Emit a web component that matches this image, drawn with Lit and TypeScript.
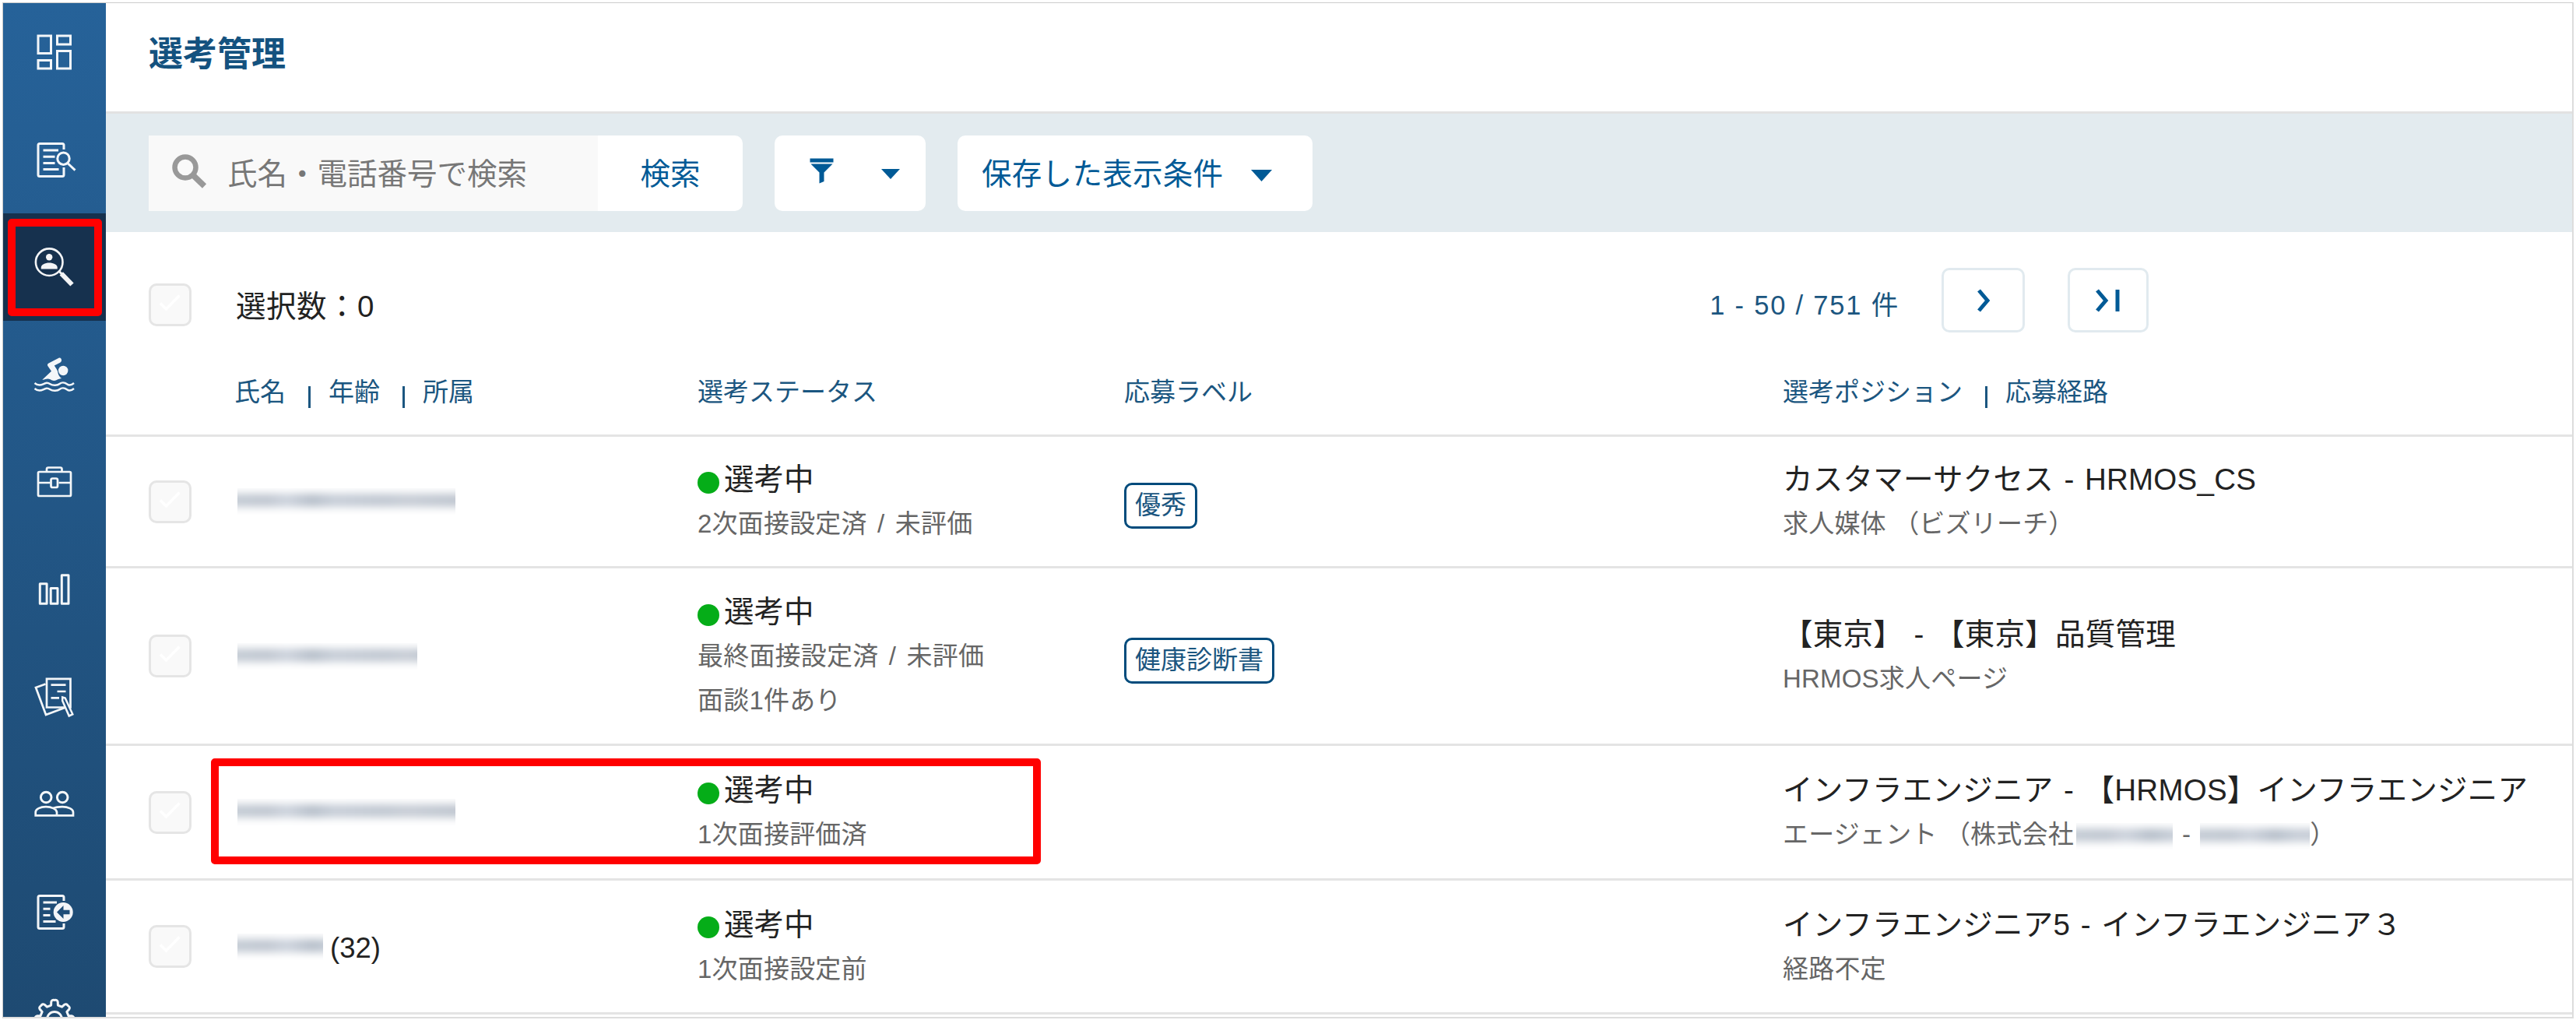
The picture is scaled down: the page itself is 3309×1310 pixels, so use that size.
import { LitElement, html, css, svg, nothing } from "lit";
import { customElement, property } from "lit/decorators.js";
import { classMap } from "lit/directives/class-map.js";
import { styleMap } from "lit/directives/style-map.js";

/* Outline of an eight-tooth gear centred on (30, 30). */
const gearPath = (() => {
  const pts: string[] = [];
  for (let i = 0; i < 8; i++) {
    const a = (i * Math.PI) / 4 - Math.PI / 2;
    const at = (r: number, d: number) =>
      `${(30 + r * Math.cos(a + d)).toFixed(2)} ${(30 + r * Math.sin(a + d)).toFixed(2)}`;
    pts.push(
      `${i ? "L" : "M"}${at(18.5, -0.24)}L${at(22.5, -0.19)}Q${at(25.5, -0.15)} ${at(24.6, 0)}Q${at(25.5, 0.15)} ${at(22.5, 0.19)}L${at(18.5, 0.24)}`
    );
  }
  return pts.join("") + "Z";
})();

const icons: Record<string, unknown> = {
  dashboard: svg`<path d="M9 9h16.5v22.5H9zM9 40.5h16.5V51H9zM33.5 9h17v11h-17zM33.5 28.5h17V51h-17z"/>`,
  jobs: svg`
    <path d="M42 17v-5.500a2 2 0 0 0-2-2H11a2 2 0 0 0-2 2v38a2 2 0 0 0 2 2h29a2 2 0 0 0 2-2V40"/>
    <path d="M15.500 18h19.500M15.500 26.300h15M15.500 34.500h15M15.500 42.600h20"/>
    <circle cx="41.500" cy="28.700" r="7.700"/><path d="M47.300 35l9.200 8.700"/>`,
  candidates: svg`
    <circle cx="23.200" cy="23.700" r="17.300" stroke-width="2.600"/>
    <path d="M35.500 35l4 4"/><path d="M38.800 38.300l13.700 14.200" stroke-width="6"/>
    <circle class="solid" cx="23.200" cy="17.300" r="4.200"/>
    <path class="solid" d="M12.800 32.500V30.500c0-3.600 5-6 10.400-6s10.500 2.400 10.500 6v2z"/>`,
  swimmer: svg`
    <path class="solid" d="M35.500 8.700l-13 6.800c-1.600.900-1.900 2.300-1 3.800l4.500 6.500-11.700 10.900c3 .300 4.600-1.300 7.400-1.200 3.600.200 4.300 2.500 7.800 2.400 3.600-.100 4.700-2.300 9.600-2.800-2-1.600-4.300-4.300-4.600-7.200-.200-3-2.600-6.100-4.700-9.300l7.400-3.900c3.400-1.900 1.700-7.500-1.700-6z"/>
    <circle class="solid" cx="41.200" cy="25" r="6.200"/>
    <path d="M4.500 41C8 44 12 44 15.500 42.300S21 40 24.500 42.300S34 44 36.500 42S43 40 46 42.300S52 43.500 55 41" stroke-width="2.500"/>
    <path d="M4.500 48C8 51 12 51 15.500 49.300S21 47 24.500 49.300S34 51 36.500 49S43 47 46 49.300S52 50.500 55 48" stroke-width="2.500"/>`,
  briefcase: svg`
    <rect x="9" y="17" width="42" height="31" rx="1.500" stroke-width="2.700"/>
    <path d="M20 16v-2.500a2 2 0 0 1 2-2h15.500a2 2 0 0 1 2 2V16M9 31h15.500M35.500 31H51" stroke-width="2.700"/>
    <rect x="25.500" y="25.500" width="8.500" height="11.500" rx="2" stroke-width="2.700"/>`,
  chart: svg`<path d="M11.300 22.800h8.800v25.400h-8.800zM25.200 28.500H34v19.700h-8.800zM39.300 11.800H48v36.400h-8.700z" stroke-linejoin="round"/>`,
  papers: svg`
    <path d="M20 6.800h30.500V43.500H20z" stroke-width="2.700"/>
    <path d="M18.500 13.500L6 18l13 35 24-9" stroke-width="2.700"/>
    <path d="M25.500 14.700h19M33.500 23h11M25.500 31.300H36" stroke-width="2.700"/>
    <path class="cut" d="M40.200 30.500l3.500 1 9.600 20.800-4.600 2.200-8.500-19.500z" stroke-width="2.500"/>`,
  people: svg`
    <circle cx="19.200" cy="21" r="6.800"/><circle cx="40.200" cy="21" r="6.800"/>
    <path d="M5.700 44.300V40c0-4 6-6.800 13.300-6.800S32.500 36 33 40v4.300zM28 35.200c3.500-1.500 7.500-2 12-2C47.500 33.200 54 36 54 40v4.300H33" stroke-width="2.700"/>`,
  report: svg`
    <path d="M42 16v-4.500a2 2 0 0 0-2-2H11a2 2 0 0 0-2 2v38a2 2 0 0 0 2 2h29a2 2 0 0 0 2-2V45"/>
    <path d="M15.500 18H33M15.500 26.300h9M15.500 34.500h9M15.500 42.600h16"/>
    <circle class="solid" cx="41.200" cy="30.500" r="12.500"/>
    <path class="hole" d="M33 30.500l8.500-8.500v5.700h8v5.600h-8V39z"/>`,
  gear: svg`<path d=${gearPath} stroke-linejoin="round"/><circle cx="30" cy="30" r="9.500"/>`,
};

const navItems = ["dashboard", "jobs", "candidates", "swimmer", "briefcase", "chart", "papers", "people", "report", "gear"];

@customElement("side-nav")
class SideNav extends LitElement {
  static styles = css`
    :host { display: block; width: 132px; flex: none; overflow: hidden; background: linear-gradient(#266299, #1e4a72); }
    .list { display: flex; flex-direction: column; margin-top: -6px; }
    .item { height: 138px; flex: none; display: flex; align-items: center; justify-content: center; position: relative; }
    .active { background: #16314e; }
    .marker { position: absolute; left: 6px; top: 7px; width: 101px; height: 105px; border: 10px solid #f00; border-radius: 5px; }
    svg { width: 60px; height: 60px; fill: none; stroke: #fff; stroke-width: 3; opacity: 0.95; }
    .solid { fill: #fff; stroke: none; }
    .cut { fill: #205080; }
    .hole { fill: #1f4e79; stroke: none; }
  `;
  render() {
    return html`<div class="list">
      ${navItems.map((name) => {
        const active = name === "candidates";
        return html`<div class=${classMap({ item: true, active })}>
          <svg viewBox="0 0 60 60">${icons[name]}</svg>
          ${active ? html`<div class="marker"></div>` : nothing}
        </div>`;
      })}
    </div>`;
  }
}

@customElement("check-box")
class CheckBox extends LitElement {
  static styles = css`
    :host { display: block; }
    .box { box-sizing: border-box; width: 55px; height: 55px; border: 3px solid #e5e5e5; border-radius: 10px; background: #f9f9f9; }
    svg { display: block; width: 49px; height: 49px; fill: none; stroke: #fff; stroke-width: 3.500; }
  `;
  render() {
    return html`<div class="box"><svg viewBox="0 0 49 49"><path d="M12 22.500l7.500 7.500 17-17.500" /></svg></div>`;
  }
}

/* A masked name: soft smudges clipped to a box. */
@customElement("masked-text")
class MaskedText extends LitElement {
  @property({ type: Number }) width = 100;
  static styles = css`
    :host { display: inline-block; vertical-align: middle; }
    .clip { height: 34px; overflow: hidden; display: flex; align-items: center; }
    .smudge { height: 17px; flex: none; width: calc(100% + 24px); margin: -3px 0 0 -12px; filter: blur(5.5px);
      background: linear-gradient(90deg, #c3cbd4, #bfc6d0 50px, #ccd2dc 76px, #b5bec9 108px, #c6cdd7 136px, #c0c7d1 200px, #c6ccd5 230px, #bcc3cd); }
  `;
  render() {
    return html`<div class="clip" style=${styleMap({ width: `${this.width}px` })}><div class="smudge"></div></div>`;
  }
}

interface Row {
  height: number;
  mask: number;
  age?: string;
  status: string[];
  label?: string;
  title: string;
  route: unknown;
  marked?: boolean;
}

const rows: Row[] = [
  { height: 169, mask: 280, status: ["2次面接設定済 / 未評価"], label: "優秀", title: "カスタマーサクセス - HRMOS_CS", route: "求人媒体 （ビズリーチ）" },
  { height: 228, mask: 231, status: ["最終面接設定済 / 未評価", "面談1件あり"], label: "健康診断書", title: "【東京】 - 【東京】品質管理", route: "HRMOS求人ページ" },
  {
    height: 173, mask: 280, status: ["1次面接評価済"], title: "インフラエンジニア - 【HRMOS】インフラエンジニア", marked: true,
    route: html`エージェント （株式会社<masked-text class="m1" .width=${124}></masked-text>-<masked-text class="m2" .width=${141}></masked-text>）`,
  },
  { height: 172, mask: 110, age: "(32)", status: ["1次面接設定前"], title: "インフラエンジニア5 - インフラエンジニア３", route: "経路不定" },
];

@customElement("candidate-table")
class CandidateTable extends LitElement {
  static styles = css`
    :host { display: block; }
    .grid { display: grid; grid-template-columns: 168px 592px 548px 846px 1fr; box-sizing: border-box; border-bottom: 3px solid #e4e4e4; align-items: center; white-space: nowrap; }
    .summary { display: flex; align-items: center; box-sizing: border-box; height: 163px; padding: 24px 0 0 55px; }
    .count { margin-left: 57px; margin-top: -4px; font-size: 38.500px; letter-spacing: 0.500px; color: #222; }
    .pager { margin-left: auto; margin-right: 544px; display: flex; align-items: center; margin-top: -12px; }
    .range { font-size: 34.500px; letter-spacing: 1.800px; color: #1b5680; margin-right: 54px; margin-top: 6px; }
    .btn { box-sizing: border-box; height: 83px; border: 3px solid #e1eaef; border-radius: 10px; display: flex; align-items: center; justify-content: center; }
    .next { width: 107px; margin-right: 55px; }
    .last { width: 104px; }
    .btn svg { width: 40px; height: 40px; fill: none; stroke: #005a96; stroke-width: 5; }
    .head { height: 100px; color: #1b5680; font-size: 33px; line-height: 50px; padding-bottom: 12px; }
    .labels { display: flex; align-items: center; }
    .first { margin-left: -3px; }
    .bar { width: 3px; height: 28px; background: #1b5680; margin: 12px 23px 0 29px; }
    .check { margin-left: 55px; }
    .row { position: relative; }
    .name { font-size: 36.500px; color: #222; display: flex; align-items: center; gap: 9px; padding-left: 1px; }
    .age { padding-top: 5px; }
    .status, .title { font-size: 38.500px; line-height: 57px; color: #222; }
    .title { letter-spacing: 0.250px; word-spacing: 2.500px; }
    .status { display: flex; align-items: center; gap: 6px; }
    .dot { width: 28px; height: 28px; border-radius: 50%; background: #05ad18; margin-top: 8px; }
    .sub { font-size: 33px; line-height: 56px; letter-spacing: 0.200px; color: #666; padding-top: 1px; }
    .step { word-spacing: 4px; }
    .tag { display: inline-block; box-sizing: border-box; height: 59px; border: 3.500px solid #004b7c; border-radius: 10px; padding: 1px 11px 0; font-size: 33px; line-height: 50px; color: #1b5680; margin-top: 11px; }
    .m1 { margin: 0 12px 0 3px; }
    .m2 { margin-left: 12px; }
    .marker { position: absolute; left: 135px; top: 16px; width: 1046px; height: 116px; border: 10px solid #f00; border-radius: 5px; }
  `;
  render() {
    return html`
      <div class="summary">
        <check-box></check-box>
        <div class="count">選択数：0</div>
        <div class="pager">
          <div class="range">1 - 50 / 751 件</div>
          <div class="btn next"><svg viewBox="0 0 40 40"><path d="M14 7l11 13-11 13" /></svg></div>
          <div class="btn last"><svg viewBox="0 0 40 40"><path d="M6 7l11 13L6 33M32 6v28" /></svg></div>
        </div>
      </div>
      <div class="grid head">
        <span></span>
        <div class="labels first"><span>氏名</span><i class="bar"></i><span>年齢</span><i class="bar"></i><span>所属</span></div>
        <div>選考ステータス</div>
        <div>応募ラベル</div>
        <div class="labels"><span>選考ポジション</span><i class="bar"></i><span>応募経路</span></div>
      </div>
      ${rows.map(
        (r) => html`<div class="grid row" style=${styleMap({ height: `${r.height}px` })}>
          <check-box class="check"></check-box>
          <div class="name"><masked-text .width=${r.mask}></masked-text>${r.age ? html`<span class="age">${r.age}</span>` : nothing}</div>
          <div>
            <div class="status"><i class="dot"></i><span>選考中</span></div>
            ${r.status.map((s) => html`<div class="sub step">${s}</div>`)}
          </div>
          <div>${r.label ? html`<span class="tag">${r.label}</span>` : nothing}</div>
          <div>
            <div class="title">${r.title}</div>
            <div class="sub">${r.route}</div>
          </div>
          ${r.marked ? html`<div class="marker"></div>` : nothing}
        </div>`
      )}
    `;
  }
}

@customElement("app-root")
class AppRoot extends LitElement {
  static styles = css`
    :host { display: block; width: 3309px; height: 1310px; box-sizing: border-box; padding: 3px 3px 2px; background: #fff; overflow: hidden;
      font-family: "Liberation Sans", "Noto Sans CJK JP", sans-serif; }
    .frame { box-sizing: border-box; height: 1305px; border: 1px solid #ccc; border-bottom: 2px solid #ddd; border-right: 2px solid #ddd; display: flex; overflow: hidden; }
    .main { flex: 1; min-width: 0; }
    .header { box-sizing: border-box; height: 142px; border-bottom: 3px solid #e2e2e2; display: flex; align-items: center; padding: 0 0 8px 55px; }
    .heading { margin: 0; font-size: 44px; line-height: 60px; color: #14527f; font-weight: 700; }
    .filters { height: 152px; background: #e3ebef; display: flex; align-items: center; padding-left: 55px; gap: 41px; }
    .search { display: flex; height: 97px; width: 763px; border-radius: 0 10px 10px 0; overflow: hidden; font-size: 38.500px; }
    .field { width: 577px; background: #f9f9f9; color: #777; display: flex; align-items: center; box-sizing: border-box; padding-left: 30px; }
    .text { padding-bottom: 4px; }
    .glass { width: 45px; height: 45px; margin-right: 26px; margin-top: -4px; fill: none; stroke: #999; flex: none; }
    .go { flex: 1; background: #fff; color: #005a96; display: flex; align-items: center; justify-content: center; }
    .drop { box-sizing: border-box; height: 97px; background: #fff; border-radius: 10px; display: flex; align-items: center; color: #005a96; font-size: 38.500px; letter-spacing: 0.300px; padding-left: 31px; }
    .funnel { width: 194px; padding-left: 45px; }
    .saved { width: 456px; }
    .drop svg { fill: #005a96; flex: none; }
    .funnel-icon { width: 31px; height: 33px; margin-top: -6px; }
    .caret { width: 24px; height: 13px; margin-left: 61px; margin-top: 3px; }
    .wide { width: 27px; height: 15px; margin-left: 36px; margin-top: 6px; }
  `;
  render() {
    return html`<div class="frame">
      <side-nav></side-nav>
      <div class="main">
        <div class="header"><h1 class="heading">選考管理</h1></div>
        <div class="filters">
          <div class="search">
            <div class="field">
              <svg class="glass" viewBox="0 0 45 45"><circle cx="17" cy="17" r="13.500" stroke-width="6.500" /><path d="M26.500 26.500L41.500 41" stroke-width="7.500" /></svg>
              <span class="text">氏名・電話番号で検索</span>
            </div>
            <div class="go"><span class="text">検索</span></div>
          </div>
          <div class="drop funnel">
            <svg class="funnel-icon" viewBox="0 0 31 33"><path d="M.500.500h30v5H.500zM1.500 7.500h28L18.500 18.500V30l-6 2.500v-14z" /></svg>
            <svg class="caret" viewBox="0 0 24 13"><path d="M0 0h24L12 13z" /></svg>
          </div>
          <div class="drop saved">
            <span class="text">保存した表示条件</span>
            <svg class="caret wide" viewBox="0 0 27 15"><path d="M0 0h27L13.500 15z" /></svg>
          </div>
        </div>
        <candidate-table></candidate-table>
      </div>
    </div>`;
  }
}
